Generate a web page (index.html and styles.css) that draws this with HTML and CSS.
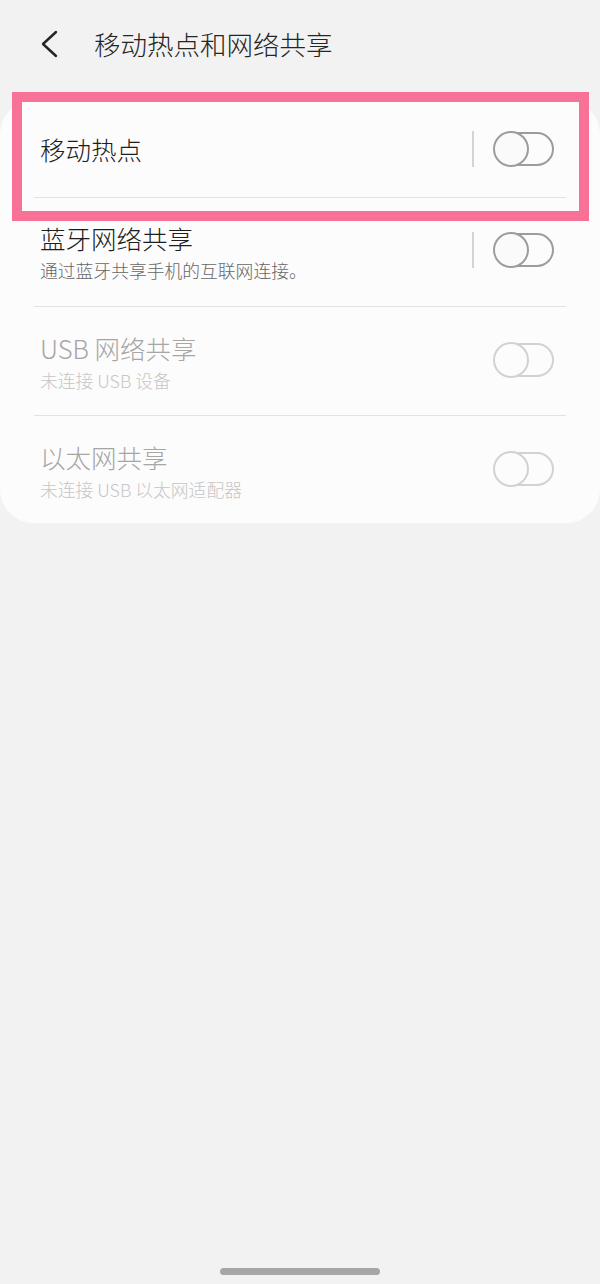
FILE: index.html
```html
<!DOCTYPE html>
<html lang="zh-CN">
  <head>
    <meta charset="utf-8">
    <title>移动热点和网络共享</title>
    <link rel="stylesheet" href="styles.css">
  </head>
  <body>
    <div class="screen">
      <div class="header">
        <svg class="back" width="22" height="30" viewBox="0 0 22 30">
          <polyline points="17,2 4,14 17,26" fill="none" stroke="#252525" stroke-width="2.4" stroke-linecap="round" stroke-linejoin="round"/>
        </svg>
        <div class="title">移动热点和网络共享</div>
      </div>

      <div class="card">
        <div class="row single">
          <div class="text">
            <div class="label">移动热点</div>
          </div>
          <div class="divider"></div>
          <svg class="toggle" width="62" height="36" viewBox="0 0 62 36">
            <rect x="2" y="2" width="58" height="32" rx="16" fill="none" stroke="#9c9c9c" stroke-width="2"/>
            <circle cx="18" cy="18" r="17" fill="#fafafa" stroke="#9c9c9c" stroke-width="2"/>
          </svg>
        </div>
        <div class="sep"></div>

        <div class="row">
          <div class="text">
            <div class="label">蓝牙网络共享</div>
            <div class="sub">通过蓝牙共享手机的互联网连接。</div>
          </div>
          <div class="divider"></div>
          <svg class="toggle" width="62" height="36" viewBox="0 0 62 36">
            <rect x="2" y="2" width="58" height="32" rx="16" fill="none" stroke="#9c9c9c" stroke-width="2"/>
            <circle cx="18" cy="18" r="17" fill="#fafafa" stroke="#9c9c9c" stroke-width="2"/>
          </svg>
        </div>
        <div class="sep"></div>

        <div class="row disabled">
          <div class="text">
            <div class="label">USB 网络共享</div>
            <div class="sub">未连接 USB 设备</div>
          </div>
          <svg class="toggle" width="62" height="36" viewBox="0 0 62 36">
            <rect x="2" y="2" width="58" height="32" rx="16" fill="none" stroke="#d2d2d2" stroke-width="2"/>
            <circle cx="18" cy="18" r="17" fill="#fcfcfc" stroke="#d2d2d2" stroke-width="2"/>
          </svg>
        </div>
        <div class="sep"></div>

        <div class="row disabled last">
          <div class="text">
            <div class="label">以太网共享</div>
            <div class="sub">未连接 USB 以太网适配器</div>
          </div>
          <svg class="toggle" width="62" height="36" viewBox="0 0 62 36">
            <rect x="2" y="2" width="58" height="32" rx="16" fill="none" stroke="#d2d2d2" stroke-width="2"/>
            <circle cx="18" cy="18" r="17" fill="#fcfcfc" stroke="#d2d2d2" stroke-width="2"/>
          </svg>
        </div>
      </div>

      <div class="highlight"></div>
      <div class="home-bar"></div>
    </div>
  </body>
</html>
```

FILE: styles.css
```css
body
{
	margin: 0;
	background: #f2f2f2;
	font-family: "Noto Sans CJK SC", "Noto Sans", sans-serif;
	font-weight: 300;
	color: #222;
}
.screen
{
	position: relative;
	height: 1284px;
	overflow: hidden;
	display: flex;
	flex-direction: column;
}
.header
{
	height: 88px;
	display: flex;
	align-items: center;
	padding-left: 39px;
}
.back
{
	display: block;
	margin-top: 2px;
}
.title
{
	margin-left: 33px;
	font-size: 26.5px;
	line-height: 34px;
	color: #252525;
}
.card
{
	margin-top: 12px;
	background: #fcfcfc;
	border-radius: 34px;
	padding: 0 34px 0 34px;
}
.row
{
	display: flex;
	align-items: center;
	padding: 25px 0 24px 6px;
}
.row.single
{
	height: 97px;
	padding-top: 0;
	padding-bottom: 0;
	box-sizing: border-box;
}
.row.disabled
{
	padding-top: 26px;
	padding-bottom: 23px;
}
.row.last
{
	padding-bottom: 22px;
}
.text
{
	flex: 1;
}
.label
{
	font-size: 25.5px;
	line-height: 30px;
	color: #1e1e1e;
}
.sub
{
	margin-top: 5px;
	font-size: 17.8px;
	line-height: 24px;
	color: #666;
}
.row.disabled .label
{
	color: #a6a6a6;
}
.row.disabled .sub
{
	color: #c6c6c6;
}
.divider
{
	width: 2px;
	height: 36px;
	background: #d4d4d4;
	margin-right: 19px;
}
.toggle
{
	display: block;
	margin-right: 11px;
}
/* two-line rows: controls sit a little above the text block's centre */
.row:not(.single) .divider,
.row:not(.single) .toggle
{
	margin-top: -6px;
}
.sep
{
	height: 1px;
	background: #e2e2e2;
}
.highlight
{
	position: absolute;
	left: 12px;
	top: 92px;
	width: 557px;
	height: 109px;
	border: 10px solid #f77296;
}
.home-bar
{
	position: absolute;
	left: 220px;
	bottom: 9px;
	width: 160px;
	height: 7px;
	border-radius: 4px;
	background: #a6a6a6;
}
```
